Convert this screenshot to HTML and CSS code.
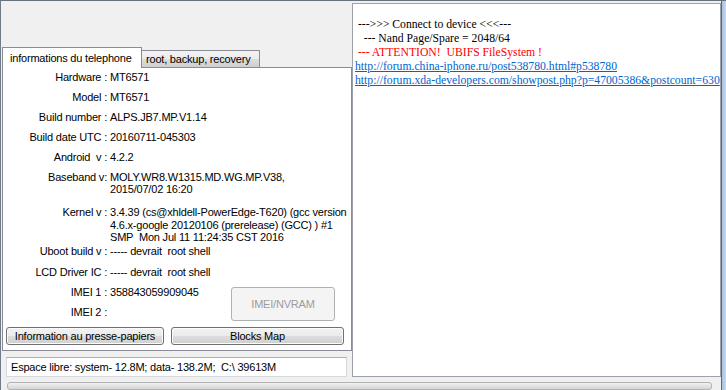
FILE: index.html
```html
<!DOCTYPE html>
<html lang="fr">
<head>
  <meta charset="UTF-8">
  <title>MTK Droid Tools</title>
  <link rel="stylesheet" href="styles.css">
</head>
<body>
  <div class="window">
    <div class="client">
      <div class="main">
        <div class="left">
          <div class="tabs">
            <div class="tab active">informations du telephone</div>
            <div class="tab">root, backup, recovery</div>
          </div>
          <div class="panel">
            <div class="row first"><div class="label">Hardware :</div><div class="value">MT6571</div></div>
            <div class="row"><div class="label">Model :</div><div class="value">MT6571</div></div>
            <div class="row"><div class="label">Build number :</div><div class="value">ALPS.JB7.MP.V1.14</div></div>
            <div class="row"><div class="label">Build date UTC :</div><div class="value">20160711-045303</div></div>
            <div class="row"><div class="label">Android&nbsp; v :</div><div class="value">4.2.2</div></div>
            <div class="row baseband"><div class="label">Baseband v:</div><div class="value">MOLY.WR8.W1315.MD.WG.MP.V38,<br>2015/07/02 16:20</div></div>
            <div class="row kernel"><div class="label">Kernel v :</div><div class="value">3.4.39 (cs@xhldell-PowerEdge-T620) (gcc version<br>4.6.x-google 20120106 (prerelease) (GCC) ) #1<br>SMP&nbsp; Mon Jul 11 11:24:35 CST 2016</div></div>
            <div class="row uboot"><div class="label">Uboot build v :</div><div class="value">----- devrait&nbsp; root shell</div></div>
            <div class="row lcd"><div class="label">LCD Driver IC :</div><div class="value">----- devrait&nbsp; root shell</div></div>
            <div class="imei">
              <div class="imei-rows">
                <div class="row first"><div class="label">IMEI 1 :</div><div class="value">358843059909045</div></div>
                <div class="row"><div class="label">IMEI 2 :</div><div class="value"></div></div>
              </div>
              <button class="btn nvram" disabled>IMEI/NVRAM</button>
            </div>
            <div class="actions">
              <button class="btn clip">Information au presse-papiers</button>
              <button class="btn blocks">Blocks Map</button>
            </div>
          </div>
          <div class="freespace">Espace libre: system- 12.8M; data- 138.2M;&nbsp; C:\ 39613M</div>
        </div>
        <div class="log">
          <div class="line"> </div>
          <div class="line"> ---&gt;&gt;&gt; Connect to device &lt;&lt;&lt;---</div>
          <div class="line">   --- Nand Page/Spare = 2048/64</div>
          <div class="line red"> --- ATTENTION!  UBIFS FileSystem !</div>
          <div class="line"><a href="#">http://forum.china-iphone.ru/post538780.html#p538780</a></div>
          <div class="line"><a href="#">http://forum.xda-developers.com/showpost.php?p=47005386&amp;postcount=630</a></div>
        </div>
      </div>
      <div class="progress"></div>
    </div>
    <div class="frame"></div>
  </div>
</body>
</html>
```
FILE: styles.css
```css
* {margin: 0; padding: 0; box-sizing: border-box;}
body {background-color: #f0f0f0; font-family: 'Liberation Sans', Arial, sans-serif; font-size: 11px; letter-spacing: -0.2px; color: #000; width: 726px; height: 390px; overflow: hidden;}
.window {display: flex; height: 390px; border-top: 1px solid #66717f; border-left: 1px solid #6f7b89;}
.client {width: 720px; display: flex; flex-direction: column;}
.frame {width: 5px; border-left: 1px solid #5a6a7e; background: linear-gradient(to right, #a9c3e0, #c4d8ee);}

.main {display: flex; height: 376px;}
.left {width: 351px; display: flex; flex-direction: column;}

.tabs {display: flex; align-items: flex-end; margin-top: 46px; margin-left: 1px; height: 20px;}
.tab {height: 17px; line-height: 16px; padding: 0 4px; width: 119px; margin-left: -1px; border: 1px solid #898c95; border-bottom: none; background: linear-gradient(#f3f3f3, #ebebeb 50%, #dddddd 51%, #cfcfcf); white-space: nowrap;}
.tab.active {height: 21px; line-height: 20px; width: 140px; margin-left: 0; margin-bottom: -1px; padding: 0 0 0 7px; background: #fff; position: relative; z-index: 1;}

.panel {margin-left: 1px; width: 350px; height: 284px; border: 1px solid #898c95; background-color: #fff; padding-top: 3px;}
.row {display: flex; line-height: 13px; margin-top: 7px; white-space: nowrap;}
.row.first {margin-top: 0;}
.label {width: 104px; text-align: right; flex-shrink: 0;}
.value {margin-left: 3px;}
.row.baseband {line-height: 12px;}
.row.kernel {line-height: 12.5px; margin-top: 11px;}
.row.uboot {margin-top: 1px;}
.row.lcd {margin-top: 8px;}

.imei {display: flex; margin-top: 7px; align-items: flex-start;}
.imei-rows {width: 228px;}
.btn {font-family: 'Liberation Sans', Arial, sans-serif; font-size: 11px; letter-spacing: -0.2px; color: #000; border: 1px solid #707070; border-radius: 3px; background: linear-gradient(#f2f2f2, #ebebeb 50%, #dddddd 51%, #cfcfcf); box-shadow: inset 0 0 0 1px #fbfbfb;}
.btn.nvram {width: 104px; height: 34px; margin-top: 1px; color: #9c9c9c; border-color: #adb2b5; background: #f4f4f4; box-shadow: none;}
.actions {display: flex; gap: 7px; margin-top: 6px; margin-left: 3px;}
.btn.clip {width: 158px; height: 18px;}
.btn.blocks {width: 173px; height: 18px;}

.freespace {margin: 6px 0 0 5px; width: 341px; height: 20px; line-height: 18px; padding-left: 4px; background-color: #fff; border: 1px solid #d5d9de; border-top-color: #abadb3; white-space: nowrap;}

.log {margin-top: 2px; width: 369px; height: 374px; border: 1px solid #9da2aa; background-color: #fff; padding-left: 2px; font-family: 'Liberation Serif', 'Times New Roman', serif; font-size: 11.7px; letter-spacing: 0; line-height: 14px; overflow: hidden;}
.line {white-space: pre;}
.red {color: #ff0000;}
.log a {color: #0066cc;}

.progress {margin: 5px 0 0 6px; width: 705px; height: 20px; border: 1px solid #b2b2b2; border-radius: 3px; background: linear-gradient(#f3f3f3, #e2e2e2 50%, #d6d6d6);}
```
